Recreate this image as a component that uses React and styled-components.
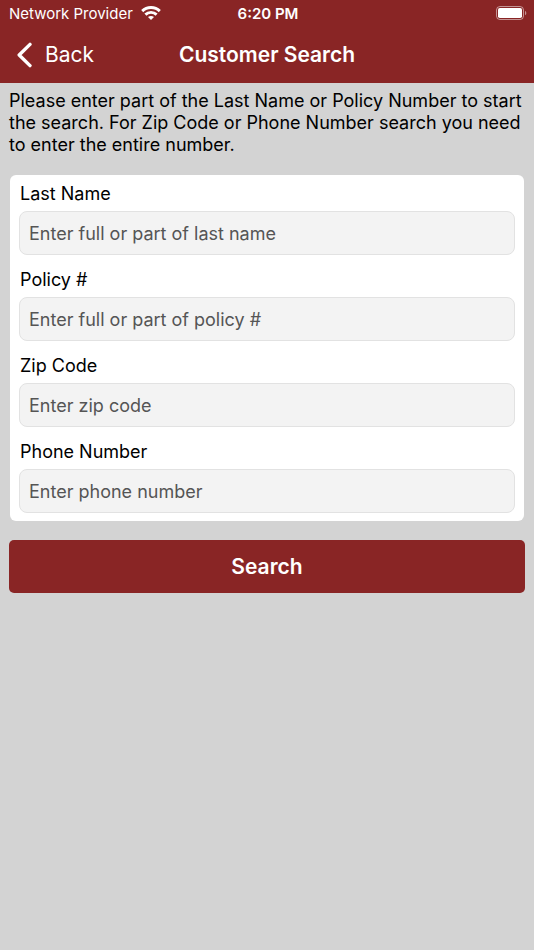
import React from 'react';
import styled, { createGlobalStyle } from 'styled-components';

const GlobalStyle = createGlobalStyle`
    * {
        box-sizing: border-box;
    }
    body {
        margin: 0;
        background: #d3d3d3;
        color: #000;
        font-family: Inter, "Liberation Sans", sans-serif;
    }
`

const Header = styled.header`
    background: #892525;
    color: #fff;
`

const StatusBar = styled.div`
    display: grid;
    grid-template-columns: 1fr auto 1fr;
    align-items: center;
    height: 26px;
    padding: 0 7px 0 9px;
    font-size: 15px;
`

const Carrier = styled.div`
    display: flex;
    align-items: center;
    gap: 8px;
`

const Time = styled.time`
    font-weight: 600;
`

const Battery = styled.svg`
    justify-self: end;
`

const NavBar = styled.div`
    display: grid;
    grid-template-columns: 1fr auto 1fr;
    align-items: center;
    height: 57px;
    padding: 0 16px;
`

const BackButton = styled.button`
    display: flex;
    align-items: center;
    justify-self: start;
    gap: 12px;
    padding: 0;
    border: 0;
    background: none;
    color: inherit;
    font: inherit;
    font-size: 21px;
    cursor: pointer;
`

const Title = styled.h1`
    margin: 0;
    font-size: 21px;
    font-weight: 600;
`

const Content = styled.main`
    padding: 7px 9px;
`

const Intro = styled.p`
    margin: 0 0 19px;
    font-size: 18px;
    line-height: 22px;
`

const Card = styled.div`
    display: flex;
    flex-direction: column;
    gap: 14px;
    margin: 0 1px 19px;
    padding: 8px 9px;
    border-radius: 6px;
    background: #fff;
`

const Field = styled.div`
    display: flex;
    flex-direction: column;
    gap: 6px;
`

const Label = styled.label`
    padding: 0 1px;
    font-size: 18px;
    line-height: 22px;
`

const Input = styled.input`
    width: 100%;
    height: 44px;
    padding: 0 9px;
    border: 1px solid #e2e2e2;
    border-radius: 8px;
    background: #f3f3f3;
    color: #000;
    font: inherit;
    font-size: 18px;

    &::placeholder {
        color: #555;
        opacity: 1;
    }
`

const SearchButton = styled.button`
    width: 100%;
    height: 53px;
    border: 0;
    border-radius: 5px;
    background: #892525;
    color: #fff;
    font: inherit;
    font-size: 21px;
    font-weight: 600;
    cursor: pointer;
`

const fields = [
    { id: 'lastName', label: 'Last Name', placeholder: 'Enter full or part of last name' },
    { id: 'policy', label: 'Policy #', placeholder: 'Enter full or part of policy #' },
    { id: 'zipCode', label: 'Zip Code', placeholder: 'Enter zip code' },
    { id: 'phone', label: 'Phone Number', placeholder: 'Enter phone number' }
]

const WifiIcon = () => (
    <svg width="20" height="14" viewBox="0 0 20 14" fill="none" stroke="#fff" strokeWidth="2.9" aria-hidden="true">
        <path d="M1.2 5.1C6 .3 14 .3 18.8 5.1"/>
        <path d="M4.4 8.6C7.5 5.6 12.5 5.6 15.6 8.6"/>
        <path d="M10 14L7 11.1C8.7 9.5 11.3 9.5 13 11.1Z" fill="#fff" stroke="none"/>
    </svg>
)

const BatteryIcon = () => (
    <Battery width="31" height="14" viewBox="0 0 31 14" aria-hidden="true">
        <rect x=".5" y=".5" width="27" height="13" rx="3.5" fill="none" stroke="#fff" strokeOpacity=".5"/>
        <rect x="2" y="2" width="24" height="10" rx="1.8" fill="#fff"/>
        <path d="M29 4.7C30.8 5.5 30.8 8.5 29 9.3Z" fill="#fff" fillOpacity=".5"/>
    </Battery>
)

const BackIcon = () => (
    <svg width="17" height="26" viewBox="0 0 17 26" fill="none" stroke="#fff" strokeWidth="3.4" strokeLinecap="round" strokeLinejoin="round" aria-hidden="true">
        <path d="M14 2.4L3.2 13L14 23.6"/>
    </svg>
)

const App = () => (
    <>
        <GlobalStyle/>
        <Header>
            <StatusBar>
                <Carrier>Network Provider <WifiIcon/></Carrier>
                <Time>6:20 PM</Time>
                <BatteryIcon/>
            </StatusBar>
            <NavBar>
                <BackButton type="button"><BackIcon/>Back</BackButton>
                <Title>Customer Search</Title>
            </NavBar>
        </Header>
        <Content>
            <Intro>
                Please enter part of the Last Name or Policy Number to start the search.
                For Zip Code or Phone Number search you need to enter the entire number.
            </Intro>
            <form onSubmit={e => e.preventDefault()}>
                <Card>
                    {fields.map(({ id, label, placeholder }) => (
                        <Field key={id}>
                            <Label htmlFor={id}>{label}</Label>
                            <Input id={id} name={id} placeholder={placeholder}/>
                        </Field>
                    ))}
                </Card>
                <SearchButton type="submit">Search</SearchButton>
            </form>
        </Content>
    </>
)

export default App;
